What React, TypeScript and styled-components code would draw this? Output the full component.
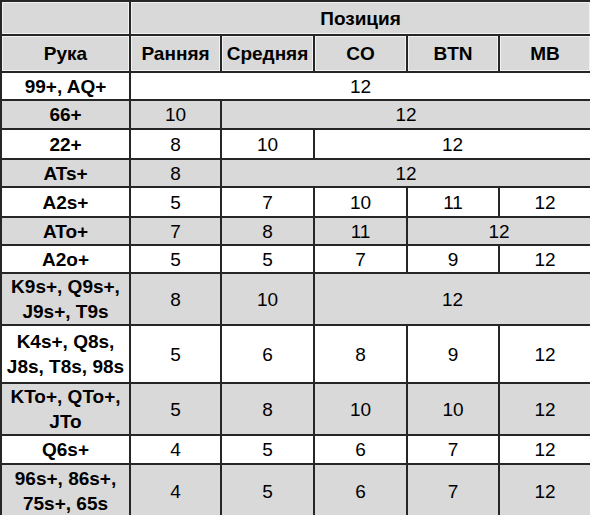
import React from 'react';
import styled, { createGlobalStyle } from 'styled-components';

const GlobalStyle = createGlobalStyle`
  html, body {
    margin: 0;
    padding: 0;
    background: #ffffff;
  }
  body {
    font-family: "Liberation Sans", Arial, sans-serif;
    color: #000000;
  }
`;

const GRID = '#262626';
const SHADE = '#d9d9d9';

const Table = styled.table`
  border-collapse: collapse;
  table-layout: fixed;
  width: 590px;
  font-size: 19px;
  line-height: 25px;
  border: 2px solid ${GRID};
`;

const Col = styled.col<{ $w: number }>`
  width: ${(p) => p.$w}px;
`;

const Row = styled.tr<{ $h: number; $shade?: boolean }>`
  height: ${(p) => p.$h}px;
  background: ${(p) => (p.$shade ? SHADE : '#ffffff')};
`;

const HeadCell = styled.th`
  border: 2px solid ${GRID};
  box-shadow: inset 0 0 0 1px #f2f2f2;
  font-weight: bold;
  text-align: center;
  vertical-align: middle;
  padding: 0 1px;
`;

const HandCell = styled.td`
  border: 2px solid ${GRID};
  font-weight: bold;
  text-align: center;
  vertical-align: middle;
  padding: 0 1px;
`;

const NumCell = styled.td`
  border: 2px solid ${GRID};
  text-align: center;
  vertical-align: middle;
  padding: 0;
`;

type Line = {
  hand: React.ReactNode;
  cells: [string, number][];
  h: number;
};

const widths = [129, 91, 93, 93, 92, 92];

const lines: Line[] = [
  { hand: '99+, AQ+', cells: [['12', 5]], h: 28 },
  { hand: '66+', cells: [['10', 1], ['12', 4]], h: 29 },
  { hand: '22+', cells: [['8', 1], ['10', 1], ['12', 3]], h: 30 },
  { hand: 'ATs+', cells: [['8', 1], ['12', 4]], h: 28 },
  { hand: 'A2s+', cells: [['5', 1], ['7', 1], ['10', 1], ['11', 1], ['12', 1]], h: 30 },
  { hand: 'ATo+', cells: [['7', 1], ['8', 1], ['11', 1], ['12', 2]], h: 28 },
  { hand: 'A2o+', cells: [['5', 1], ['5', 1], ['7', 1], ['9', 1], ['12', 1]], h: 28 },
  {
    hand: (
      <>
        K9s+, Q9s+,
        <br />
        J9s+, T9s
      </>
    ),
    cells: [['8', 1], ['10', 1], ['12', 3]],
    h: 52,
  },
  {
    hand: (
      <>
        K4s+, Q8s,
        <br />
        J8s, T8s, 98s
      </>
    ),
    cells: [['5', 1], ['6', 1], ['8', 1], ['9', 1], ['12', 1]],
    h: 58,
  },
  {
    hand: (
      <>
        KTo+, QTo+,
        <br />
        JTo
      </>
    ),
    cells: [['5', 1], ['8', 1], ['10', 1], ['10', 1], ['12', 1]],
    h: 48,
  },
  { hand: 'Q6s+', cells: [['4', 1], ['5', 1], ['6', 1], ['7', 1], ['12', 1]], h: 29 },
  {
    hand: (
      <>
        96s+, 86s+,
        <br />
        75s+, 65s
      </>
    ),
    cells: [['4', 1], ['5', 1], ['6', 1], ['7', 1], ['12', 1]],
    h: 54,
  },
];

export default function App() {
  return (
    <>
      <GlobalStyle />
      <Table>
        <colgroup>
          {widths.map((w, i) => (
            <Col key={i} $w={w} />
          ))}
        </colgroup>
        <thead>
          <Row $h={34} $shade>
            <HeadCell />
            <HeadCell colSpan={5}>Позиция</HeadCell>
          </Row>
          <Row $h={37} $shade>
            <HeadCell>Рука</HeadCell>
            <HeadCell>Ранняя</HeadCell>
            <HeadCell>Средняя</HeadCell>
            <HeadCell>CO</HeadCell>
            <HeadCell>BTN</HeadCell>
            <HeadCell>MB</HeadCell>
          </Row>
        </thead>
        <tbody>
          {lines.map((line, i) => (
            <Row key={i} $h={line.h} $shade={i % 2 === 1}>
              <HandCell>{line.hand}</HandCell>
              {line.cells.map(([value, span], j) => (
                <NumCell key={j} colSpan={span}>
                  {value}
                </NumCell>
              ))}
            </Row>
          ))}
        </tbody>
      </Table>
    </>
  );
}
